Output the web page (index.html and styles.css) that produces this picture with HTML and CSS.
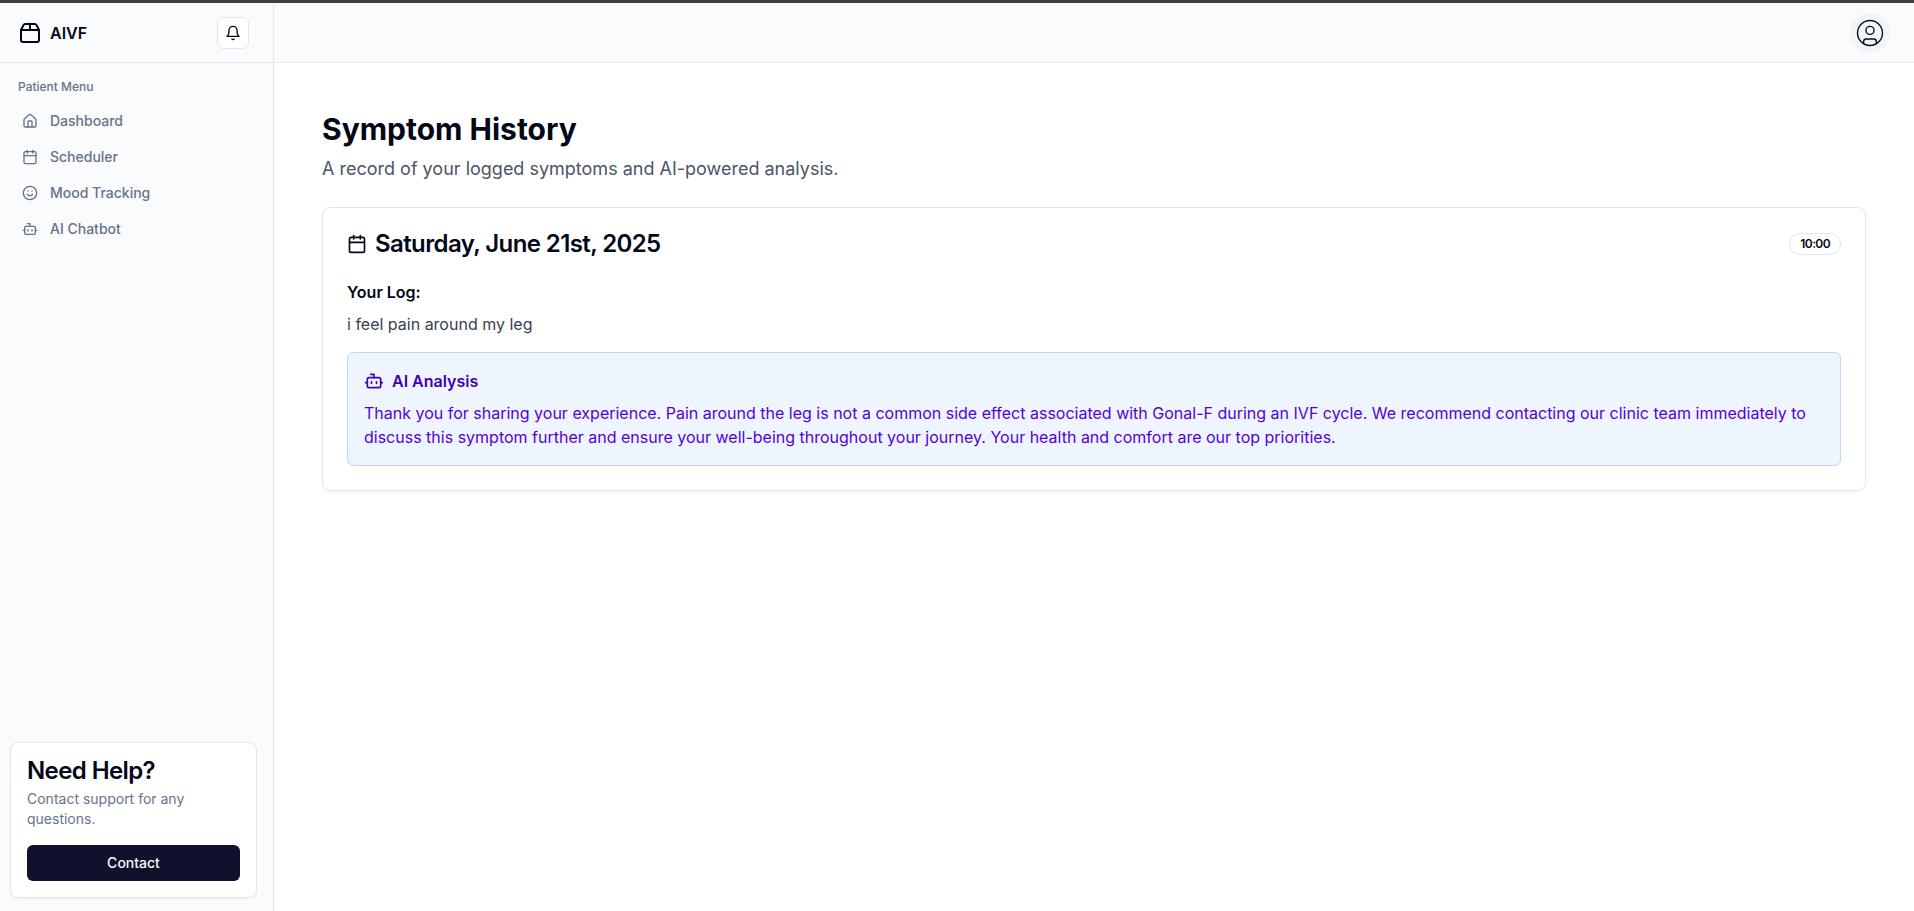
FILE: index.html
```html
<!DOCTYPE html>
<html lang="en">
<head>
<meta charset="utf-8">
<title>AIVF</title>
<link rel="stylesheet" href="styles.css">
</head>
<body>
<div class="app">
  <aside class="sidebar">
    <div class="brand-bar">
      <a class="brand">
        <svg class="icon icon-lg" viewBox="0 0 24 24"><path d="M3 9h18v10a2 2 0 0 1-2 2H5a2 2 0 0 1-2-2V9Z"/><path d="m3 9 2.45-4.9A2 2 0 0 1 7.24 3h9.52a2 2 0 0 1 1.8 1.1L21 9"/><path d="M12 3v6"/></svg>
        <span>AIVF</span>
      </a>
      <button class="bell">
        <svg class="icon icon-sm" viewBox="0 0 24 24"><path d="M6 8a6 6 0 0 1 12 0c0 7 3 9 3 9H3s3-2 3-9"/><path d="M10.3 21a1.94 1.94 0 0 0 3.4 0"/></svg>
      </button>
    </div>
    <nav class="nav">
      <h4 class="nav-title">Patient Menu</h4>
      <a class="nav-item"><svg class="icon icon-sm" viewBox="0 0 24 24"><path d="M15 21v-8a1 1 0 0 0-1-1h-4a1 1 0 0 0-1 1v8"/><path d="M3 10a2 2 0 0 1 .709-1.528l7-5.999a2 2 0 0 1 2.582 0l7 5.999A2 2 0 0 1 21 10v9a2 2 0 0 1-2 2H5a2 2 0 0 1-2-2z"/></svg>Dashboard</a>
      <a class="nav-item"><svg class="icon icon-sm" viewBox="0 0 24 24"><path d="M8 2v4"/><path d="M16 2v4"/><rect width="18" height="18" x="3" y="4" rx="2"/><path d="M3 10h18"/></svg>Scheduler</a>
      <a class="nav-item"><svg class="icon icon-sm" viewBox="0 0 24 24"><circle cx="12" cy="12" r="10"/><path d="M8 14s1.5 2 4 2 4-2 4-2"/><path d="M9 9h.01"/><path d="M15 9h.01"/></svg>Mood Tracking</a>
      <a class="nav-item"><svg class="icon icon-sm" viewBox="0 0 24 24"><path d="M12 8V4H8"/><rect width="16" height="12" x="4" y="8" rx="2"/><path d="M2 14h2"/><path d="M20 14h2"/><path d="M15 13v2"/><path d="M9 13v2"/></svg>AI Chatbot</a>
    </nav>
    <section class="help">
      <h3 class="card-title">Need Help?</h3>
      <p class="help-text">Contact support for any questions.</p>
      <button class="contact">Contact</button>
    </section>
  </aside>
  <div class="page">
    <header class="topbar">
      <button class="avatar">
        <svg class="avatar-icon" viewBox="0 0 28 28"><circle cx="14" cy="14" r="12.5"/><circle cx="14" cy="11.4" r="4"/><path d="M7.6 24.6v-1.9a2.7 2.7 0 0 1 2.7-2.7h7.4a2.7 2.7 0 0 1 2.7 2.7v1.9"/></svg>
      </button>
    </header>
    <main class="main">
      <h1 class="title">Symptom History</h1>
      <p class="subtitle">A record of your logged symptoms and AI-powered analysis.</p>
      <article class="card">
        <div class="card-head">
          <h3 class="card-title card-date"><svg class="icon icon-md" viewBox="0 0 24 24"><path d="M8 2v4"/><path d="M16 2v4"/><rect width="18" height="18" x="3" y="4" rx="2"/><path d="M3 10h18"/></svg>Saturday, June 21st, 2025</h3>
          <span class="badge">10:00</span>
        </div>
        <h4 class="log-title">Your Log:</h4>
        <p class="log-text">i feel pain around my leg</p>
        <div class="analysis">
          <h4 class="analysis-title"><svg class="icon icon-md" viewBox="0 0 24 24"><path d="M12 8V4H8"/><rect width="16" height="12" x="4" y="8" rx="2"/><path d="M2 14h2"/><path d="M20 14h2"/><path d="M15 13v2"/><path d="M9 13v2"/></svg>AI Analysis</h4>
          <p class="analysis-text">Thank you for sharing your experience. Pain around the leg is not a common side effect associated with Gonal-F during an IVF cycle. We recommend contacting our clinic team immediately to discuss this symptom further and ensure your well-being throughout your journey. Your health and comfort are our top priorities.</p>
        </div>
      </article>
    </main>
  </div>
</div>
</body>
</html>
```
FILE: styles.css
```css
* { box-sizing: border-box; margin: 0; padding: 0; }
body {
  font-family: Inter, "Liberation Sans", sans-serif;
  font-size: 16px;
  line-height: 24px;
  color: #020817;
  background: #fff;
}
button { font: inherit; color: inherit; border: 0; }
.app {
  display: grid;
  grid-template-columns: 274px 1fr;
  height: 911px;
  border-top: 3px solid #404040;
  overflow: hidden;
}
.icon { fill: none; stroke: currentColor; stroke-width: 2; stroke-linecap: round; stroke-linejoin: round; flex: none; }
.icon-sm { width: 16px; height: 16px; }
.icon-md { width: 20px; height: 20px; }
.icon-lg { width: 24px; height: 24px; }

.sidebar { display: flex; flex-direction: column; background: #fafbfd; border-right: 1px solid #e0e7f0; }
.brand-bar {
  display: flex; align-items: center; justify-content: space-between;
  height: 60px; padding: 0 24px 0 18px; border-bottom: 1px solid #e0e7f0;
}
.brand { display: flex; align-items: center; gap: 8px; font-weight: 600; }
.bell {
  display: flex; align-items: center; justify-content: center;
  width: 32px; height: 32px; border: 1px solid #e1e6f2; border-radius: 6px; background: #fff;
}
.nav { flex: 1; padding: 12px 16px 0 10px; font-size: 14px; line-height: 20px; font-weight: 500; color: #64748b; }
.nav-title { padding: 0 8px; margin-bottom: 4px; font-size: 12px; line-height: 24px; font-weight: 500; }
.nav-item { display: flex; align-items: center; gap: 12px; padding: 8px 12px; }
.help {
  margin: 0 16px 13px 10px; padding: 16px; background: #fff;
  border: 1px solid #e1e6f2; border-radius: 8px; box-shadow: 0 1px 2px rgba(0, 0, 0, .05);
}
.card-title { font-size: 24px; line-height: 24px; font-weight: 600; letter-spacing: -0.6px; }
.help-text { margin: 6px 0 16px; font-size: 14px; line-height: 20px; color: #64748b; }
.contact {
  display: block; width: 100%; height: 36px; border-radius: 6px;
  background: #10122b; color: #f8fafc; font-size: 14px; line-height: 20px; font-weight: 500;
}

.topbar {
  display: flex; align-items: center; justify-content: flex-end;
  height: 60px; padding: 0 24px; background: #fafbfd; border-bottom: 1px solid #e0e7f0;
}
.avatar {
  display: flex; align-items: center; justify-content: center;
  width: 40px; height: 40px; border-radius: 50%; background: #f0f5fa;
}
.avatar-icon { width: 28px; height: 28px; fill: none; stroke: #111; stroke-width: 1.4; }

.main { padding: 48px; }
.title { font-size: 30px; line-height: 36px; font-weight: 700; }
.subtitle { margin: 8px 0 24px; font-size: 18px; line-height: 28px; color: #4b5563; }
.card { padding: 24px; border: 1px solid #e1e6f2; border-radius: 8px; box-shadow: 0 1px 2px rgba(0, 0, 0, .05); }
.card-head { display: flex; align-items: center; justify-content: space-between; margin-bottom: 24px; }
.card-date { display: flex; align-items: center; gap: 8px; }
.badge {
  padding: 2px 10px; border: 1px solid #e1e6f2; border-radius: 11px;
  font-size: 12px; line-height: 16px; font-weight: 600; letter-spacing: -0.6px;
}
.log-title { font-size: 16px; font-weight: 600; margin-bottom: 8px; }
.log-text { color: #374151; }
.analysis { margin-top: 16px; padding: 16px; border: 1px solid #bed7fb; border-radius: 6px; background: #eef5ff; }
.analysis-title { display: flex; align-items: center; gap: 8px; margin-bottom: 8px; font-size: 16px; font-weight: 600; color: #4400b0; }
.analysis-text { color: #5400d8; }
```
